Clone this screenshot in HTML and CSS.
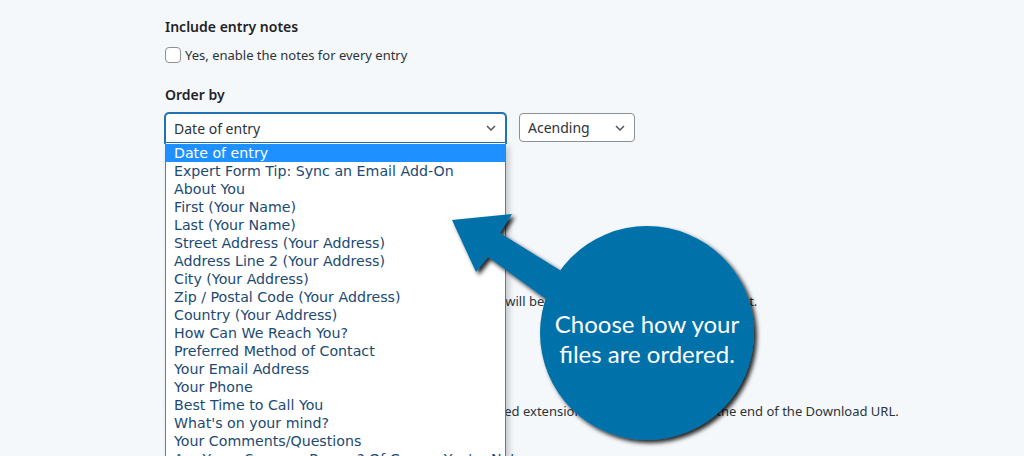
FILE: index.html
```html
<!DOCTYPE html>
<html lang="en">
<head>
    <meta charset="UTF-8">
    <meta name="viewport" content="width=device-width, initial-scale=1.0">
    <title>Entries export settings</title>
    <link rel="stylesheet" href="styles.css">
</head>
<body>
    <div class="container">
        <div class="field">
            <h3 class="field-title">Include entry notes</h3>
            <label class="check">
                <span class="box"></span>
                Yes, enable the notes for every entry
            </label>
        </div>

        <div class="field">
            <h3 class="field-title">Order by</h3>
            <div class="select-row">
                <div class="select select-wide is-open">
                    <span>Date of entry</span>
                    <svg class="chev" width="10" height="6" viewBox="0 0 10 6"><path d="M1 1l4 4 4-4" fill="none" stroke="#50575e" stroke-width="1.5"/></svg>
                </div>
                <div class="select select-small">
                    <span>Acending</span>
                    <svg class="chev" width="10" height="6" viewBox="0 0 10 6"><path d="M1 1l4 4 4-4" fill="none" stroke="#50575e" stroke-width="1.5"/></svg>
                </div>
            </div>
        </div>

        <p class="desc desc-one">Choose the field used to sort the entries. The first entry will be shown at the top of the export list.</p>
        <p class="desc desc-two">Your files will all be renamed and saved with the preferred extension that is then added to the end of the Download URL.</p>
    </div>

    <ul class="dropdown">
        <li class="active">Date of entry</li>
        <li>Expert Form Tip: Sync an Email Add-On</li>
        <li>About You</li>
        <li>First (Your Name)</li>
        <li>Last (Your Name)</li>
        <li>Street Address (Your Address)</li>
        <li>Address Line 2 (Your Address)</li>
        <li>City (Your Address)</li>
        <li>Zip / Postal Code (Your Address)</li>
        <li>Country (Your Address)</li>
        <li>How Can We Reach You?</li>
        <li>Preferred Method of Contact</li>
        <li>Your Email Address</li>
        <li>Your Phone</li>
        <li>Best Time to Call You</li>
        <li>What's on your mind?</li>
        <li>Your Comments/Questions</li>
        <li>Are You a Summer Person? Of Course You're Not</li>
    </ul>

    <svg class="callout" width="1024" height="456" viewBox="0 0 1024 456">
        <defs>
            <filter id="shade" x="-20%" y="-20%" width="140%" height="140%">
                <feDropShadow dx="3" dy="3" stdDeviation="2" flood-color="#000" flood-opacity="0.85"/>
            </filter>
        </defs>
        <g fill="#0071a9" filter="url(#shade)">
            <polygon points="452,220 512,214 500,233 600,295 575,320 488,257 476,272"/>
            <circle cx="647" cy="333" r="107"/>
        </g>
        <text class="callout-text" x="647" y="333">Choose how your</text>
        <text class="callout-text" x="647" y="363">files are ordered.</text>
    </svg>
</body>
</html>
```

FILE: styles.css
```css
body {
    margin: 0;
    background-color: #f5f8fb;
    font-family: "Noto Sans", "Open Sans", sans-serif;
    color: #1d2327;
    overflow: hidden;
}
.container {
    padding: 17px 0 0 165px;
}
.field {
    margin-bottom: 20px;
}
.field-title {
    margin: 0 0 8px;
    font-size: 14px;
    font-weight: 600;
    line-height: 20px;
}
.check {
    display: flex;
    align-items: center;
    gap: 4px;
    font-size: 13px;
    line-height: 20px;
    color: #2c3338;
}
.box {
    width: 14px;
    height: 14px;
    border: 1px solid #8c8f94;
    border-radius: 4px;
    background: #fff;
}
.select-row {
    display: flex;
    gap: 13px;
}
.select {
    display: flex;
    align-items: center;
    justify-content: space-between;
    box-sizing: border-box;
    height: 30px;
    padding: 0 9px 0 8px;
    border: 1px solid #8c8f94;
    border-radius: 4px;
    background: #fff;
    font-size: 14px;
    color: #2c3338;
}
.select-wide {
    width: 341px;
}
.select-small {
    width: 116px;
    height: 29px;
}
.is-open {
    border-color: #2271b1;
    box-shadow: 0 0 0 1px #2271b1;
    border-radius: 4px 4px 0 0;
}
.desc {
    margin: 0;
    font-size: 13px;
    line-height: 20px;
    color: #2c3338;
    white-space: nowrap;
}
.desc-one {
    margin-top: 148px;
}
.desc-two {
    margin-top: 90px;
}
.dropdown {
    position: absolute;
    top: 143px;
    left: 165px;
    width: 339px;
    margin: 0;
    padding: 1px 0 0;
    list-style: none;
    background: #fff;
    border: 1px solid #767676;
    border-top: none;
    box-shadow: 3px 3px 6px rgba(0, 0, 0, 0.2);
    font-family: "DejaVu Sans", Verdana, sans-serif;
    font-size: 14.2px;
    color: #1b4a72;
}
.dropdown li {
    height: 18px;
    line-height: 18px;
    padding-left: 8px;
    white-space: nowrap;
}
.dropdown .active {
    background: #1e90ff;
    color: #fff;
}
.callout {
    position: absolute;
    top: 0;
    left: 0;
}
.callout-text {
    fill: #fff;
    font-family: Lato, "Open Sans", sans-serif;
    font-size: 24px;
    text-anchor: middle;
}
```
